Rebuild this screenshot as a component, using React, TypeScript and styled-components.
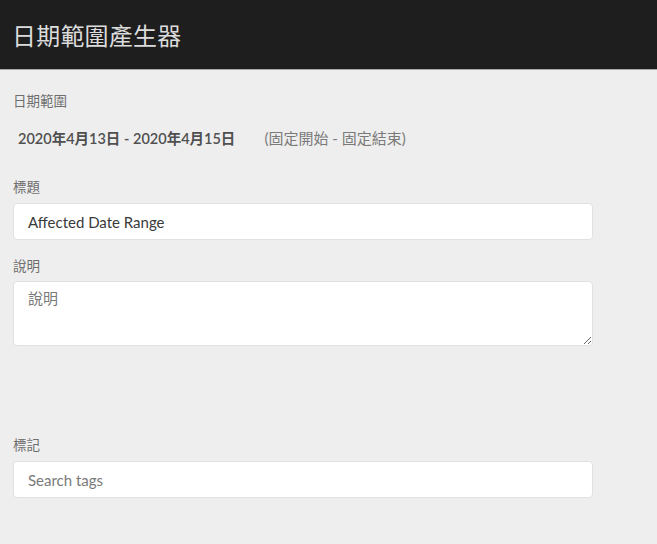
import styled, { createGlobalStyle } from "styled-components";

const GlobalStyle = createGlobalStyle`
  html, body {
    margin: 0;
    padding: 0;
    background: #eeeeee;
  }
  body {
    font-family: Lato, "Noto Sans CJK TC", sans-serif;
  }
`;

const fontStack = `Lato, "Noto Sans CJK TC", sans-serif`;

const Page = styled.div`
  width: 657px;
  height: 544px;
  background: #eeeeee;
  overflow: hidden;
`;

const Header = styled.header`
  height: 69px;
  background: #1e1e1e;
  border-bottom: 1px solid #a8a8a8;
  display: flex;
  align-items: center;
  padding-left: 12px;
`;

const Title = styled.h1`
  margin: 0;
  font-family: ${fontStack};
  font-size: 24px;
  font-weight: 400;
  color: #dcdcdc;
  letter-spacing: 0.2px;
`;

const Content = styled.main`
  padding: 0 13px;
  display: flex;
  flex-direction: column;
  width: 580px;
`;

const Label = styled.label<{ $top: number }>`
  display: block;
  margin-top: ${(p) => p.$top}px;
  font-family: ${fontStack};
  font-size: 13.5px;
  line-height: 16px;
  color: #6e6e6e;
`;

const DateRow = styled.div`
  display: flex;
  align-items: baseline;
  margin-top: 18px;
  padding-left: 5px;
  height: 20px;
`;

const DateValue = styled.span`
  font-family: ${fontStack};
  font-size: 14.5px;
  font-weight: 600;
  color: #505050;
`;

const DateHint = styled.span`
  margin-left: 29px;
  font-family: ${fontStack};
  font-size: 15px;
  color: #7a7a7a;
`;

const TextInput = styled.input`
  box-sizing: border-box;
  display: block;
  width: 580px;
  height: 37px;
  margin-top: 8px;
  padding: 0 14px;
  border: 1px solid #e1e1e1;
  border-radius: 4px;
  background: #ffffff;
  font-family: ${fontStack};
  font-size: 15px;
  color: #3a3a3a;
  outline: none;

  &::placeholder {
    color: #7a7a7a;
  }
`;

const TextArea = styled.textarea`
  box-sizing: border-box;
  display: block;
  width: 580px;
  height: 65px;
  margin-top: 7px;
  padding: 6px 14px;
  border: 1px solid #e1e1e1;
  border-radius: 4px;
  background: #ffffff;
  font-family: ${fontStack};
  font-size: 15px;
  line-height: 20px;
  color: #3a3a3a;
  outline: none;
  resize: vertical;

  &::placeholder {
    color: #7a7a7a;
  }
`;

export default function App() {
  return (
    <Page>
      <GlobalStyle />
      <Header>
        <Title>日期範圍產生器</Title>
      </Header>
      <Content>
        <Label $top={23}>日期範圍</Label>
        <DateRow>
          <DateValue>2020年4月13日 - 2020年4月15日</DateValue>
          <DateHint>(固定開始 - 固定結束)</DateHint>
        </DateRow>
        <Label $top={32}>標題</Label>
        <TextInput defaultValue="Affected Date Range" />
        <Label $top={18}>說明</Label>
        <TextArea placeholder="說明" />
        <Label $top={91}>標記</Label>
        <TextInput placeholder="Search tags" />
      </Content>
    </Page>
  );
}
